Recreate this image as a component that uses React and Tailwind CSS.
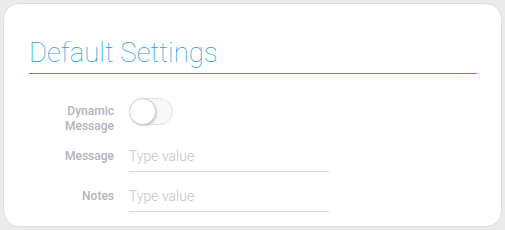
export default function App() {
  return (
    <div className="w-[505px] h-[230px] bg-[#ebebeb] p-[3px]" style={{ fontFamily: "Roboto, 'Liberation Sans', sans-serif" }}>
      <div className="h-[224px] bg-white rounded-[16px] border border-[#dedede] pl-[25px] pr-[24px] pt-[33px]">
        <div className="text-[27.6px] font-thin leading-[32px] text-[#2f9fd0] pb-[4px]">
          Default Settings
        </div>
        <div className="h-px bg-[#2aa0c4]"></div>
        <div className="mt-[24px] flex flex-col">
          <div className="flex items-start">
            <div className="mt-[6px] w-[85px] text-right text-[12px] font-medium leading-[15px] text-[#b3b3bc]">
              Dynamic<br />Message
            </div>
            <div className="ml-[15px] relative w-[44px] h-[27px] rounded-full bg-[#f8f8fa] border border-[#e2e2e6]">
              <div className="absolute left-[-1px] top-[-1px] w-[27px] h-[27px] rounded-full bg-white border border-[#d4d4d8] shadow-[1px_1px_2px_rgba(0,0,0,0.18)]"></div>
            </div>
          </div>
          <div className="flex items-start mt-[6px]">
            <div className="w-[85px] text-right text-[12px] font-medium leading-[32px] text-[#b3b3bc]">Message</div>
            <div className="ml-[15px] w-[200px] h-[32px] border-b border-[#d6d6d9] text-[14px] font-light leading-[32px] text-[#c4c4ca]">Type value</div>
          </div>
          <div className="flex items-start mt-[8px]">
            <div className="w-[85px] text-right text-[12px] font-medium leading-[32px] text-[#b3b3bc]">Notes</div>
            <div className="ml-[15px] w-[200px] h-[32px] border-b border-[#d6d6d9] text-[14px] font-light leading-[32px] text-[#c4c4ca]">Type value</div>
          </div>
        </div>
      </div>
    </div>
  );
}
